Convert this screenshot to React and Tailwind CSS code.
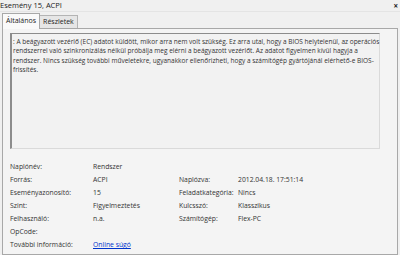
const rows = [
  ['Naplónév:', 'Rendszer', '', ''],
  ['Forrás:', 'ACPI', 'Naplózva:', '2012.04.18. 17:51:14'],
  ['Eseményazonosító:', '15', 'Feladatkategória:', 'Nincs'],
  ['Szint:', 'Figyelmeztetés', 'Kulcsszó:', 'Klasszikus'],
  ['Felhasználó:', 'n.a.', 'Számítógép:', 'Flex-PC'],
  ['OpCode:', '', '', ''],
]

const lines = [
  ': A beágyazott vezérlő (EC) adatot küldött, mikor arra nem volt szükség. Ez arra utal, hogy a BIOS helytelenül, az operációs',
  'rendszerrel való szinkronizálás nélkül próbálja meg elérni a beágyazott vezérlőt. Az adatot figyelmen kívül hagyja a',
  'rendszer. Nincs szükség további műveletekre, ugyanakkor ellenőrizheti, hogy a számítógép gyártójánál elérhető-e BIOS-',
  'frissítés.',
]

export default function App() {
  return (
    <div className="w-[400px] h-[255px] overflow-hidden bg-[#f0f0f0] text-[#222] font-['Open_Sans','Liberation_Sans',sans-serif] flex flex-col">
      {/* title bar */}
      <div className="h-[12px] flex items-center justify-between pr-[2px] border-b border-[#e4e4e4]">
        <span className="text-[7.5px] leading-none">Esemény 15, ACPI</span>
        <span className="text-[8px] leading-none font-bold">×</span>
      </div>

      {/* tabs */}
      <div className="flex items-end pl-[2px] h-[16px]">
        <div className="h-[16px] px-[3px] bg-[#fafafa] border border-b-0 border-[#a8a8a8] flex items-center text-[7px] relative z-10 -mb-px">
          Általános
        </div>
        <div className="h-[13px] px-[3px] bg-[#e6e6e6] border border-l-0 border-b-0 border-[#b4b4b4] flex items-center text-[7px]">
          Részletek
        </div>
      </div>

      {/* panel */}
      <div className="flex-1 mx-[2px] border border-[#a8a8a8] bg-[#f4f4f4] px-[7px] pt-[4px]">
        <div className="h-[116px] mr-[10px] border-t border-l-2 border-[#8c8c8c] border-r border-b border-r-[#dadada] border-b-[#dadada] bg-[#f2f2f2] pl-[1px] pt-[3px]">
          {lines.map((l, i) => (
            <div key={i} className="text-[6.5px] leading-[9.3px] whitespace-nowrap text-[#333]">{l}</div>
          ))}
        </div>

        <div className="mt-[12px] text-[6.8px] text-[#333]">
          {rows.map((r, i) => (
            <div key={i} className="grid grid-cols-[83px_86px_59px_1fr] h-[13px] items-center whitespace-nowrap">
              <span>{r[0]}</span>
              <span>{r[1]}</span>
              <span>{r[2]}</span>
              <span>{r[3]}</span>
            </div>
          ))}
          <div className="grid grid-cols-[83px_1fr] h-[13px] items-center whitespace-nowrap">
            <span>További információ:</span>
            <span className="text-[#0033cc] underline">Online súgó</span>
          </div>
        </div>
      </div>
    </div>
  )
}
